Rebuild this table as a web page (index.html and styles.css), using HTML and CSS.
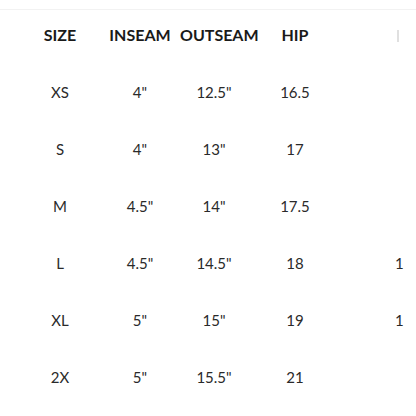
FILE: index.html
```html
<!DOCTYPE html>
<html>
<head>
<meta charset="utf-8">
<link rel="stylesheet" href="styles.css">
</head>
<body>
<div class="page">
  <div class="topline"></div>
  <div class="table">
    <div class="row head">
      <div class="c c1">SIZE</div><div class="c c2">INSEAM</div><div class="c c3">OUTSEAM</div><div class="c c4">HIP</div><div class="c c5"></div><div class="c c6"><span class="stub"></span></div>
    </div>
    <div class="row">
      <div class="c c1">XS</div><div class="c c2">4"</div><div class="c c3">12.5"</div><div class="c c4">16.5</div><div class="c c5"></div><div class="c c6"></div>
    </div>
    <div class="row">
      <div class="c c1">S</div><div class="c c2">4"</div><div class="c c3">13"</div><div class="c c4">17</div><div class="c c5"></div><div class="c c6"></div>
    </div>
    <div class="row">
      <div class="c c1">M</div><div class="c c2">4.5"</div><div class="c c3">14"</div><div class="c c4">17.5</div><div class="c c5"></div><div class="c c6"></div>
    </div>
    <div class="row">
      <div class="c c1">L</div><div class="c c2">4.5"</div><div class="c c3">14.5"</div><div class="c c4">18</div><div class="c c5"></div><div class="c c6">1</div>
    </div>
    <div class="row">
      <div class="c c1">XL</div><div class="c c2">5"</div><div class="c c3">15"</div><div class="c c4">19</div><div class="c c5"></div><div class="c c6">1</div>
    </div>
    <div class="row">
      <div class="c c1">2X</div><div class="c c2">5"</div><div class="c c3">15.5"</div><div class="c c4">21</div><div class="c c5"></div><div class="c c6"></div>
    </div>
  </div>
</div>
</body>
</html>
```
FILE: styles.css
```css
html, body {
  margin: 0;
  padding: 0;
  background: #ffffff;
}
.page {
  width: 416px;
  height: 416px;
  overflow: hidden;
  font-family: Lato, "Noto Sans", sans-serif;
  color: #2a2a2a;
}
.topline {
  height: 1px;
  margin-top: 9px;
  background: #f2f2f2;
}
.table {
  display: flex;
  flex-direction: column;
  padding-left: 20px;
}
.row {
  display: grid;
  grid-template-columns: 80px 80px 68px 94px 53px 100px;
  height: 57px;
  align-items: end;
  font-size: 15px;
  line-height: 16px;
}
.row.head {
  height: 35px;
  font-size: 16px;
  font-weight: 700;
  color: #1a1a1a;
}
.c {
  text-align: center;
  white-space: nowrap;
  padding-bottom: 2px;
}
.c6 {
  text-align: left;
  overflow: hidden;
}
.stub {
  display: block;
  width: 2px;
  height: 12px;
  margin-left: 2px;
  margin-bottom: 1px;
  background: #e0e0e0;
}
```
